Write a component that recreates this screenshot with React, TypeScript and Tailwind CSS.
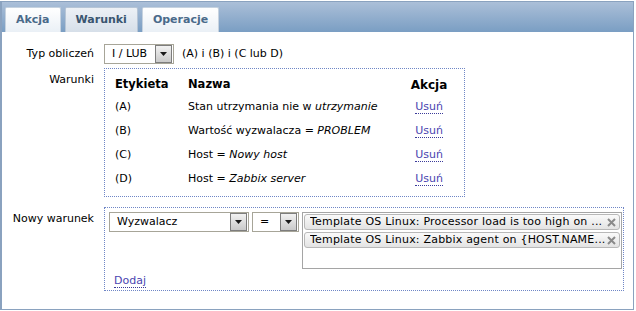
import React from "react";

const font = { fontFamily: '"DejaVu Sans", Verdana, sans-serif' };

const conditions = [
  { label: "(A)", text: "Stan utrzymania nie w ", value: "utrzymanie" },
  { label: "(B)", text: "Wartość wyzwalacza = ", value: "PROBLEM" },
  { label: "(C)", text: "Host = ", value: "Nowy host" },
  { label: "(D)", text: "Host = ", value: "Zabbix server" },
];

const selected = [
  "Template OS Linux: Processor load is too high on ...",
  "Template OS Linux: Zabbix agent on {HOST.NAME...",
];

function Arrow() {
  return (
    <span className="flex h-[18px] w-[17px] items-center justify-center border border-[#7d7d7d] bg-gradient-to-b from-[#f2f2f2] to-[#cacaca]">
      <svg width="7" height="4" viewBox="0 0 7 4">
        <path d="M0 0h7L3.5 4z" fill="#1a1a1a" />
      </svg>
    </span>
  );
}

function Select({ value, width }: { value: string; width: string }) {
  return (
    <div
      className={`flex h-[20px] ${width} shrink-0 items-center justify-between border border-[#a7a598] bg-white pl-[7px] pr-px text-[11px] text-black`}
    >
      <span>{value}</span>
      <Arrow />
    </div>
  );
}

function Tab({ label, active }: { label: string; active?: boolean }) {
  return (
    <div
      className={`flex h-[25px] items-center rounded-t-[2px] border border-b-0 px-[10px] text-[11px] font-bold ${
        active
          ? "border-[#b6c5d6] bg-gradient-to-b from-[#edf1f6] to-[#d6dfe9] text-[#3a556f]"
          : "border-[#c6d2df] bg-gradient-to-b from-[#ffffff] to-[#eaf0f6] text-[#4a6a8a]"
      }`}
    >
      {label}
    </div>
  );
}

function Row({ label, children, top }: { label: string; children: React.ReactNode; top?: boolean }) {
  return (
    <div className={`flex ${top ? "items-start" : "items-center"} gap-[10px]`}>
      <div className={`w-[92px] shrink-0 text-right text-[11px] text-black ${top ? "pt-[4px]" : ""}`}>{label}</div>
      {children}
    </div>
  );
}

function Link({ children }: { children: React.ReactNode }) {
  return (
    <span className="border-b border-dotted border-[#3b3b9a] text-[11px] leading-[13px] text-[#4a44b0]">
      {children}
    </span>
  );
}

export default function App() {
  return (
    <div className="h-[311px] w-[636px] bg-white" style={font}>
      <div className="mt-px flex h-[309px] w-[634px] flex-col border border-l-2 border-[#8aa2bf] bg-white">
        {/* Tabs */}
        <div className="flex h-[30px] shrink-0 items-end gap-[4px] bg-gradient-to-b from-[#abbfd8] to-[#7a9ec3] pl-[3px]">
          <Tab label="Akcja" />
          <Tab label="Warunki" active />
          <Tab label="Operacje" />
        </div>

        {/* Form */}
        <div className="flex flex-col pt-[12px]">
          <Row label="Typ obliczeń">
            <Select value="I / LUB" width="w-[70px]" />
            <span className="-ml-[2px] text-[11px] text-black">(A) i (B) i (C lub D)</span>
          </Row>

          <div className="mt-[4px]">
            <Row label="Warunki" top>
              <div className="h-[129px] w-[361px] border border-dotted border-[#6f86c6] pl-[10px] pr-[8px] pt-[7px]">
                <table className="w-full text-[11px] text-black">
                  <thead>
                    <tr className="h-[17px] text-left font-bold">
                      <th className="w-[73px] p-0 text-[11.5px]">Etykieta</th>
                      <th className="p-0 text-[11.5px]">Nazwa</th>
                      <th className="w-[54px] p-0 text-center text-[12px]">Akcja</th>
                    </tr>
                  </thead>
                  <tbody>
                    {conditions.map((c, i) => (
                      <tr key={c.label} className={i === 0 ? "h-[25px]" : "h-[24px]"}>
                        <td className="p-0 pb-[4px] align-bottom">{c.label}</td>
                        <td className="p-0 pb-[4px] align-bottom">
                          {c.text}
                          <i>{c.value}</i>
                        </td>
                        <td className="p-0 pb-[4px] text-center align-bottom">
                          <Link>Usuń</Link>
                        </td>
                      </tr>
                    ))}
                  </tbody>
                </table>
              </div>
            </Row>
          </div>

          <div className="mt-[10px]">
            <Row label="Nowy warunek" top>
              <div className="flex h-[84px] w-[520px] flex-col border border-dotted border-[#6f86c6] pl-[4px] pt-[4px]">
                <div className="flex gap-[3px]">
                  <Select value="Wyzwalacz" width="w-[140px]" />
                  <Select value="=" width="w-[47px]" />
                  <div className="flex h-[57px] w-[320px] flex-col gap-[2px] border border-[#a5a5a5] bg-white p-[1px]">
                    {selected.map((s) => (
                      <div
                        key={s}
                        className="flex h-[16px] items-center gap-[2px] rounded-[3px] border border-[#b8b8b8] bg-gradient-to-b from-[#fafafa] to-[#e3e3e3] pl-[5px] pr-[3px] text-[11px] tracking-[0.2px] text-black"
                      >
                        <span className="min-w-0 flex-1 overflow-hidden whitespace-nowrap">{s}</span>
                        <svg width="9" height="9" viewBox="0 0 9 9" className="shrink-0">
                          <path d="M1 1l7 7M8 1L1 8" stroke="#8a8a8a" strokeWidth="2" />
                        </svg>
                      </div>
                    ))}
                  </div>
                </div>
                <div className="mt-[3px] pl-[5px] leading-[13px]">
                  <Link>Dodaj</Link>
                </div>
              </div>
            </Row>
          </div>
        </div>
      </div>
    </div>
  );
}
